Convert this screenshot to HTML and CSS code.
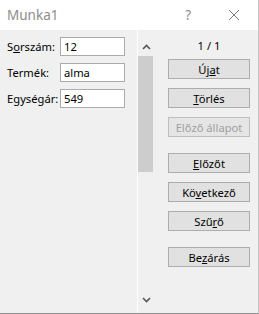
FILE: index.html
```html
<!DOCTYPE html>
<html lang="hu">
<head>
<meta charset="utf-8">
<title>Munka1</title>
<link rel="stylesheet" href="styles.css">
</head>
<body>
<div class="window">
  <div class="titlebar">
    <span class="title">Munka1</span>
    <span class="help">?</span>
    <svg class="close" width="12" height="12" viewBox="0 0 12 12"><path d="M1 1L11 11M11 1L1 11" stroke="#7a7a7a" stroke-width="1" fill="none"/></svg>
  </div>
  <div class="body">
    <div class="fields">
      <div class="row"><label class="label">S<u>o</u>rszám:</label><div class="input">12</div></div>
      <div class="row"><label class="label">Termék:</label><div class="input">alma</div></div>
      <div class="row"><label class="label">E<u>g</u>ységár:</label><div class="input">549</div></div>
    </div>
    <div class="sep"></div>
    <div class="scroll">
      <div class="arrow up"><svg width="9" height="6" viewBox="0 0 9 6"><path d="M1 5L4.5 1.5L8 5" stroke="#555" stroke-width="1.6" fill="none"/></svg></div>
      <div class="track"><div class="thumb"></div></div>
      <div class="arrow down"><svg width="9" height="6" viewBox="0 0 9 6"><path d="M1 1L4.5 4.5L8 1" stroke="#555" stroke-width="1.6" fill="none"/></svg></div>
    </div>
    <div class="actions">
      <div class="counter">1 / 1</div>
      <div class="group">
        <button class="btn">Új<u>a</u>t</button>
        <button class="btn"><u>T</u>örlés</button>
        <button class="btn disabled">Előző állapot</button>
      </div>
      <div class="group">
        <button class="btn"><u>E</u>lőzőt</button>
        <button class="btn">Kö<u>v</u>etkező</button>
        <button class="btn">Szű<u>r</u>ő</button>
      </div>
      <div class="group">
        <button class="btn">Be<u>z</u>árás</button>
      </div>
    </div>
  </div>
</div>
</body>
</html>
```

FILE: styles.css
```css
html, body {
  margin: 0;
  padding: 0;
  background: #ffffff;
}
.window {
  width: 258px;
  height: 313px;
  border-right: 1px solid #c4c4c4;
  border-bottom: 1px solid #8f8f8f;
  display: flex;
  flex-direction: column;
  font-family: "Noto Sans", "Open Sans", sans-serif;
  font-size: 11.2px;
  color: #000;
}
.titlebar {
  height: 30px;
  flex: none;
  background: #ffffff;
  display: flex;
  align-items: center;
  padding-left: 7px;
}
.title {
  font-size: 13.5px;
  color: #8c8c8c;
  flex: 1;
}
.help {
  font-size: 13.5px;
  color: #8c8c8c;
  margin-right: 37px;
}
.close {
  margin-right: 18px;
}
.body {
  flex: 1;
  background: #f0f0f0;
  display: flex;
}
.fields {
  width: 130px;
  padding: 7px 0 0 7px;
  display: flex;
  flex-direction: column;
  gap: 7px;
}
.row {
  display: flex;
  align-items: center;
  height: 19px;
}
.label {
  width: 53px;
  flex: none;
  white-space: nowrap;
  line-height: 19px;
}
.input {
  width: 60px;
  height: 17px;
  border: 1px solid #ababab;
  background: #ffffff;
  padding-left: 3px;
  line-height: 17px;
}
.sep {
  width: 1px;
  background: #ffffff;
}
.scroll {
  width: 16px;
  display: flex;
  flex-direction: column;
  padding-top: 7px;
}
.arrow {
  height: 19px;
  display: flex;
  align-items: center;
  justify-content: center;
}
.track {
  flex: 1;
}
.thumb {
  width: 15px;
  height: 116px;
  background: #cdcdcd;
}
.arrow.down {
  height: 16px;
  align-items: flex-start;
  padding-top: 12px;
}
.actions {
  padding: 7px 0 0 14px;
  width: 82px;
  display: flex;
  flex-direction: column;
}
.counter {
  height: 22px;
  line-height: 17px;
  text-align: center;
}
.group {
  display: flex;
  flex-direction: column;
  gap: 9px;
  margin-bottom: 16px;
}
.btn {
  width: 82px;
  height: 20px;
  padding: 0;
  margin: 0;
  border: 1px solid #adadad;
  background: #e1e1e1;
  font-family: inherit;
  font-size: 11.2px;
  color: #000;
  line-height: 17px;
}
.btn.disabled {
  color: #a0a0a0;
  border-color: #bfbfbf;
  background: #e5e5e5;
}
```
